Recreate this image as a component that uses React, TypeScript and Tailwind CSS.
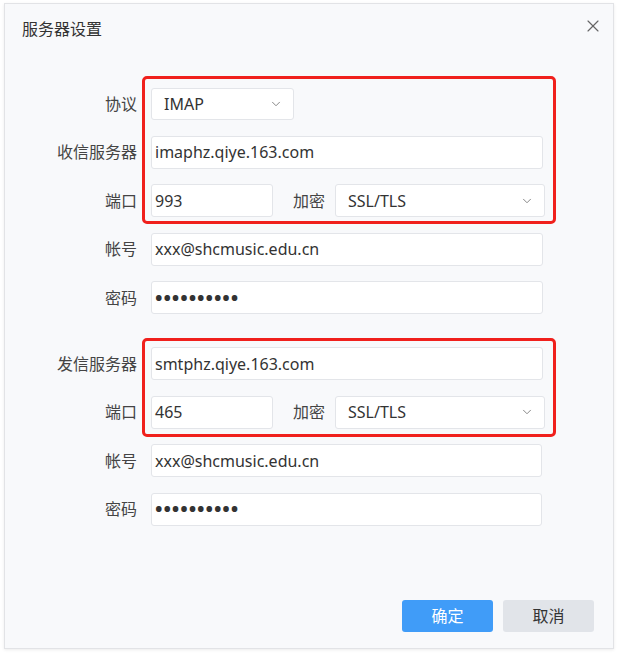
import React from 'react';
import { ChevronDown, X } from 'lucide-react';

const font = { fontFamily: '"Noto Sans", "Noto Sans CJK SC", sans-serif' };

const Label: React.FC<{ text: string }> = ({ text }) => (
  <div className="w-[133px] shrink-0 pr-[1px] text-right text-[16px] text-[#444]">{text}</div>
);

const TextBox: React.FC<{ value: string; className?: string; dots?: boolean }> = ({ value, className = 'w-[392px]', dots }) => (
  <div className={`${className} ml-[13px] flex h-[33px] items-center rounded-[3px] border border-[#e3e5e9] bg-white pl-[3px] text-[16px] text-[#333]`}>
    {dots ? <span className="text-[20px] font-bold leading-none tracking-[0.9px] text-[#333]">••••••••••</span> : value}
  </div>
);

const Select: React.FC<{ value: string; className: string }> = ({ value, className }) => (
  <div className={`${className} flex h-[33px] items-center justify-between rounded-[3px] border border-[#e3e5e9] bg-white pl-[12px] pr-[10px] text-[16px] text-[#333]`}>
    <span>{value}</span>
    <ChevronDown size={14} strokeWidth={1.5} className="text-[#777]" />
  </div>
);

const Row: React.FC<{ label: string; children: React.ReactNode }> = ({ label, children }) => (
  <div className="flex h-[33px] items-center">
    <Label text={label} />
    {children}
  </div>
);

const PortRow: React.FC<{ port: string }> = ({ port }) => (
  <Row label="端口">
    <TextBox value={port} className="w-[122px]" />
    <div className="ml-[20px] w-[42px] text-[16px] text-[#444]">加密</div>
    <Select value="SSL/TLS" className="w-[210px]" />
  </Row>
);

export default function App() {
  return (
    <div className="min-h-[653px] bg-white pl-[4px] pt-[3px]" style={font}>
      <div className="flex h-[646px] w-[610px] flex-col border border-[#e2e3e6] bg-[#f8f9fb] shadow-[0_1px_3px_rgba(0,0,0,0.08)]">
        <div className="flex items-center justify-between pl-[17px] pr-[10px] pt-[13px]">
          <div className="text-[16px] leading-[24px] text-[#333]">服务器设置</div>
          <X size={20} strokeWidth={1.4} className="-mt-[6px] text-[#666]" />
        </div>

        <div className="relative mt-[46px] flex flex-col gap-[15.5px]">
          <div className="pointer-events-none absolute left-[137px] top-[-11px] h-[148px] w-[414px] rounded-[5px] border-[3px] border-[#f0201c]" />
          <Row label="协议">
            <div className="ml-[13px]">
              <Select value="IMAP" className="w-[143px] !h-[32px]" />
            </div>
          </Row>
          <Row label="收信服务器">
            <TextBox value="imaphz.qiye.163.com" />
          </Row>
          <PortRow port="993" />
          <Row label="帐号">
            <TextBox value="xxx@shcmusic.edu.cn" />
          </Row>
          <Row label="密码">
            <TextBox value="" dots />
          </Row>
        </div>

        <div className="relative mt-[33px] flex flex-col gap-[15.5px]">
          <div className="pointer-events-none absolute left-[137px] top-[-9px] h-[99px] w-[414px] rounded-[5px] border-[3px] border-[#f0201c]" />
          <Row label="发信服务器">
            <TextBox value="smtphz.qiye.163.com" />
          </Row>
          <PortRow port="465" />
          <Row label="帐号">
            <TextBox value="xxx@shcmusic.edu.cn" className="w-[391px]" />
          </Row>
          <Row label="密码">
            <TextBox value="" dots className="w-[391px]" />
          </Row>
        </div>

        <div className="mt-auto flex justify-end gap-[10px] pb-[16px] pr-[19px]">
          <button className="h-[32px] w-[91px] rounded-[3px] bg-[#409cf8] text-[16px] text-white">确定</button>
          <button className="h-[32px] w-[91px] rounded-[3px] bg-[#e1e4e9] text-[16px] text-[#333]">取消</button>
        </div>
      </div>
    </div>
  );
}
